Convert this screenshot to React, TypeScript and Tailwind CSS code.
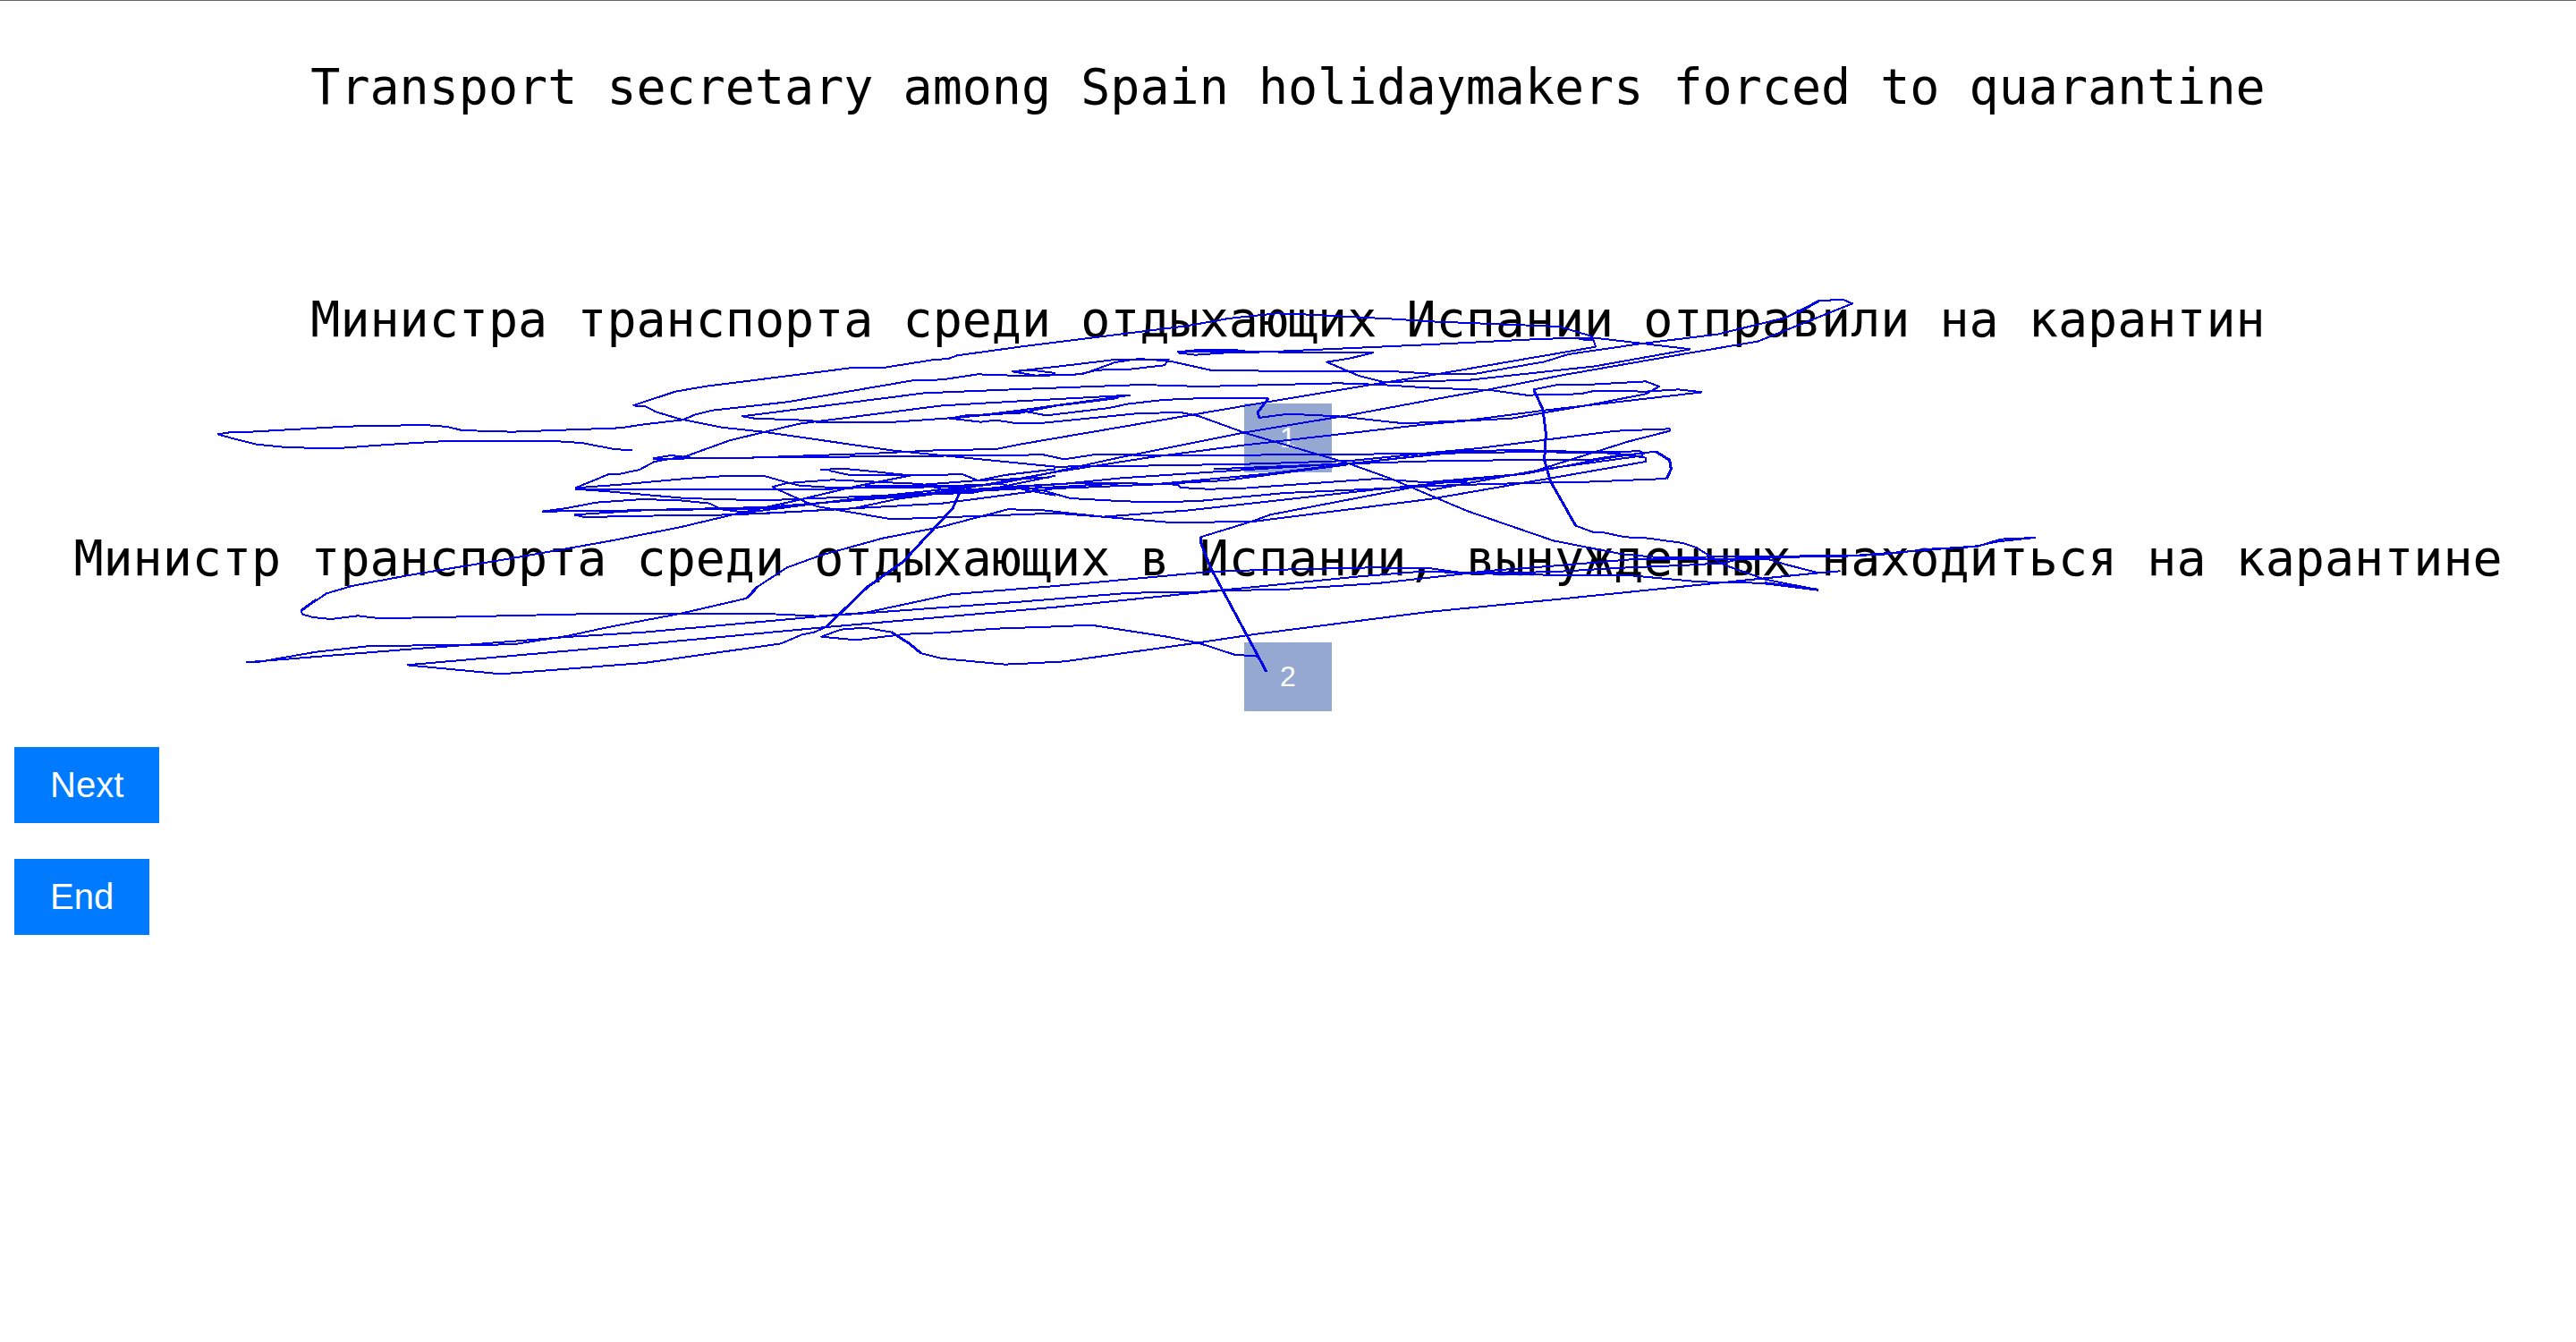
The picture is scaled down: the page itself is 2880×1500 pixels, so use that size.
import type { ReactNode } from 'react';

/* Pen strokes of the pointer trail, in units of a third of a pixel. */
const thinStrokes: string[] = [
  '1463,427 1605,380 1710,362 2200,300 2303,300 2480,272 2518,271 2550,259 2760,230 3320,160 3460,135 3620,118 3690,120 4000,136 4140,145 4570,162 4680,195 4692,230 4140,325 3970,352 3590,415 2760,557 2680,573 2480,577 2280,587 1820,603 1740,604 1660,602 1590,594 1530,604',
  '1463,427 1505,430 1540,448 1620,472 1760,500 1900,515 2330,577 2880,632 3240,628 3560,622 3870,612 4140,585 4300,570 4760,512 4940,505 4940,512 4800,548 4460,655 4140,690 3960,708 3330,778 3040,800 2880,788 2500,802 2330,808 2080,765 2030,745 1930,700',
  '70,523 110,517 180,515 500,497 765,492 840,498 890,510 1057,515 1420,502 1500,490 1630,475 1670,458 1730,443 1980,415 2400,343 2500,340 2620,322 2760,327 2970,322 3080,282 3160,270 3265,278 3400,308 3590,311 3990,311 4140,320 4290,320 4520,280 4600,255 4840,220 5100,188 5330,132 5440,76 5520,71 5553,85 5235,212 5010,250 4580,325 4340,372 4140,408 3860,460 3510,518 3100,600 2760,675 2680,690 2200,740 1810,790 1620,835 1380,882 1080,935 700,998 520,1032 435,1057 350,1115 355,1127 390,1137 450,1143 540,1132 610,1140 760,1138 1340,1125 1910,1125 2080,1133 2240,1122 2530,1060 2880,1032 3390,985 3510,980 3940,970 4140,973 4260,990 4540,995 4790,995 5040,1018 5240,1022 5440,1045',
  '2735,313 2880,297 3080,273 3260,272 3245,292 3130,305 3020,308 2960,322 2820,327 2735,313 2800,308 2880,318',
  '1460,577 1400,573 1290,552 1180,545 850,545 640,558 460,571 300,567 200,557 120,537 70,523',
  '1270,703 1380,658 1420,656 1485,642 1535,615 1640,597 1790,543 2020,488 2500,427 2760,412 3130,392 3060,402 2760,443 2580,465 2525,470 2630,482 2680,476 2740,485 2840,485 3160,453 3300,450 3360,462 3520,520 3860,620 4000,670 4260,780 4550,880 4780,925 4900,936 5340,932 5640,928 5810,908 5970,900 6050,875 6165,870 6040,883 5970,898 5720,918 5530,932 5160,938',
  '1270,703 1420,692 1640,672 1760,664 1900,662 1980,685 2020,695 2130,702 2550,700',
  '1270,707 2100,708 2400,695 2620,678 2710,660 2880,640',
  '1270,707 1380,715 1640,738 1900,745 2400,725 2900,690 3100,670 3400,650 3900,618 4260,578 4470,577 4680,583 4840,580 4855,588 4780,592 4680,608 4390,610 4140,613 3860,622 3410,640',
  '1157,782 1235,772 1340,752 1480,742 1600,743 1720,755 1760,775 1880,790 2200,772 2350,740 2500,720 2720,708 2880,700 3100,688',
  '1157,782 1380,780 1900,768 2400,730 2600,700 2880,650 3200,600 3510,560 4140,488 4260,478 4410,470 4670,425 4860,388 4905,363 4860,346 4680,356 4560,358 4485,373 4485,385',
  '4625,830 4685,852 4720,853 4790,868 4860,871 4985,888 5030,903 5120,960 5260,1010 5440,1045',
  '1265,793 1305,802 1420,798 1800,793 2000,783 2500,755 2880,705 3200,692 3600,655 3860,622 4260,580',
  '1265,793 1500,778 1900,772 2400,725 2600,720 2880,662',
  '5050,382 4970,373 4860,380 4690,377 4640,388 4460,392 4340,375 4140,368 3970,357 3830,352 3370,363 3170,357 2760,372 2440,385 1830,463 1870,470 2060,477 2080,483 2340,482 2540,468 2780,447 2850,460 3060,435 3120,422 3240,408 3400,401 3595,402',
  '3562,468 3660,455 3830,463 4050,487 4260,477 4520,443 5050,382',
  '2525,470 2580,460 2760,452 2880,428 3090,402',
  '5010,238 4690,200 4520,203 4140,222 3590,247 3290,247 3360,240 3480,240 3560,250 3450,250 3350,257 3290,250',
  '3290,247 3560,247 3945,250 3870,268 3790,281 3900,328 3980,348 4260,342 4690,295 5010,238',
  '4625,200 4660,208 4685,205',
  '1530,606 1820,602 2460,596 2840,592 2910,607 3020,590 3260,595 4140,588 4470,582 4760,587 4860,602 4860,615 4140,740 3550,815 3280,820 3040,800 2830,777 2720,775 2500,833 2300,872 2090,930 1980,970 1880,1035',
  '1845,1073 1620,1125 1380,1170 1240,1200 1060,1228 580,1233 400,1253 200,1288 165,1288',
  '165,1288 700,1245 900,1230 1240,1203 1500,1187 2080,1135 2760,1085 3130,1055 3360,1052 3500,1040 3900,1000 4110,983 4260,988 4540,985 4800,970 5000,962 5120,955 5180,940',
  '705,1297 1020,1327 1500,1290 1960,1225 2030,1195 2070,1187 2110,1170',
  '705,1297 1500,1227 2110,1170 2880,1103 3300,1060 3440,1047 3570,1045 3660,1043 3960,1023 4260,990 4320,982 4610,960 4820,942 5270,942 5330,960 5440,988 5510,982 5440,988 5140,1018 4580,1075 4140,1118 4020,1133 3540,1195 3360,1222 2910,1285 2760,1293 2710,1295 2500,1275 2430,1258',
  '2330,1187 2240,1172 2160,1178 2095,1202 2210,1213 2380,1193 2510,1188 2680,1175 2880,1168 3000,1163 3260,1203 3360,1223 3480,1262 3560,1268',
  '3367,868 3540,815 3600,793 4110,695 4140,710 4520,640 4850,595',
  '4140,683 4460,655 4700,608 4850,585 4895,582',
  '4930,672 4660,683 4480,686 4140,696 3960,706 3650,720 3350,748 3190,750 3110,748 2930,738 2840,712 2760,700',
  '4260,683 4100,683 3960,672 3500,705 3390,707 3300,702 3290,692 3100,687 2950,687 2760,697 2500,715',
  '3200,692 3450,678 3860,625',
  '2090,643 2160,638 2240,645 2380,660 2570,658 2620,678 2860,668',
  '2120,645 2190,660 2400,660 2200,700 1990,750 1810,790',
  '1930,700 1980,687 2130,676 2260,682 2430,690 2510,710 2600,692',
  '2240,695 2560,695 2700,690 2780,710 2880,728',
];

const thickStrokes: string[] = [
  '2110,1170 2250,1035 2370,950 2430,885 2535,772 2565,705',
  '2430,1258 2390,1225 2330,1187',
  '1845,1073 1880,1035',
  '3560,1268 3588,1320',
  '3400,970 3367,885 3367,868',
  '3595,402 3560,448 3562,468',
  '4485,375 4515,440 4525,520 4520,610 4540,680 4625,830',
  '4895,582 4940,610 4945,640 4930,672',
  '5370,115 5440,76',
  '350,1115 400,1078',
  '5260,1022 5440,1045',
  '3400,970 3588,1320',
];

function Trail() {
  return (
    <svg
      className="pointer-events-none absolute top-0 left-0 w-full fill-none stroke-[#0000e8]"
      viewBox="-660 -930 8640 4500"
      shapeRendering="crispEdges"
      aria-hidden="true"
    >
      {thinStrokes.map((points) => (
        <polyline key={points} points={points} strokeWidth={6} strokeLinejoin="round" />
      ))}
      {thickStrokes.map((points) => (
        <polyline key={points} points={points} strokeWidth={9} strokeLinejoin="round" />
      ))}
    </svg>
  );
}

function Sentence({ children }: { children: ReactNode }) {
  return (
    <p className="text-center font-['DejaVu_Sans_Mono',monospace] text-[55px] leading-[64px] text-black">
      {children}
    </p>
  );
}

function Choice({ children }: { children: ReactNode }) {
  return (
    <button
      type="button"
      className="mt-[62px] bg-[#94a8d2] px-10 py-5 text-[32px] leading-[37px] text-white"
    >
      {children}
    </button>
  );
}

function Action({ children }: { children: ReactNode }) {
  return (
    <button type="button" className="bg-[#007bff] px-10 py-5 text-[40px] leading-[45px] text-white">
      {children}
    </button>
  );
}

export default function App() {
  return (
    <main className="relative min-h-screen border-t border-[#666] bg-white px-4 pt-16 font-['Liberation_Sans',Arial,sans-serif]">
      <Sentence>Transport secretary among Spain holidaymakers forced to quarantine</Sentence>
      <section className="mt-49 flex flex-col items-center">
        <Sentence>Министра транспорта среди отдыхающих Испании отправили на карантин</Sentence>
        <Choice>1</Choice>
      </section>
      <section className="mt-16 flex flex-col items-center">
        <Sentence>
          Министр транспорта среди отдыхающих в Испании, вынужденных находиться на карантине
        </Sentence>
        <Choice>2</Choice>
      </section>
      <div className="mt-10 flex flex-col items-start gap-10">
        <Action>Next</Action>
        <Action>End</Action>
      </div>
      <Trail />
    </main>
  );
}
